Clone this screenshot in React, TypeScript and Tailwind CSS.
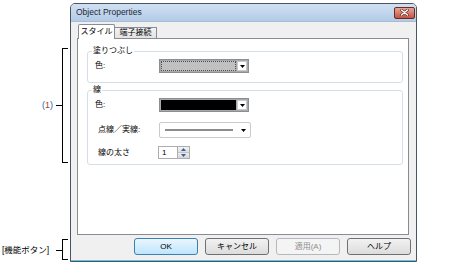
import React from "react";

const jp = "font-['Liberation_Sans','Noto_Sans_CJK_JP',sans-serif]";

function Arrow({ color = "#000" }: { color?: string }) {
  return (
    <svg width="5" height="3" viewBox="0 0 5 3">
      <path d="M0 0 H5 L2.5 3 Z" fill={color} />
    </svg>
  );
}

function ColorCombo({ fill, dotted }: { fill: string; dotted?: boolean }) {
  return (
    <div className="w-[90px] h-[14px] border border-[#8a8f96] bg-[#a9a9a9] flex p-[1px] gap-[1px]">
      <div
        className={
          "flex-1 " +
          (dotted ? "border border-dotted border-[#505050] " : "") +
          fill
        }
      />
      <div className="w-[10px] bg-white border border-[#c9c9c9] flex items-center justify-center">
        <Arrow />
      </div>
    </div>
  );
}

function Btn({
  children,
  primary,
  disabled,
}: {
  children: React.ReactNode;
  primary?: boolean;
  disabled?: boolean;
}) {
  const cls = primary
    ? "border-[#3c7fb1] bg-linear-to-b from-[#eaf6fd] to-[#bee6fd] text-black"
    : disabled
    ? "border-[#b5b8bb] bg-[#f4f4f4] text-[#8d8d8d]"
    : "border-[#707070] bg-linear-to-b from-[#f2f2f2] to-[#dcdcdc] text-black";
  return (
    <div
      className={
        "w-[64px] h-[17px] rounded-[3px] border flex items-center justify-center text-[8px] leading-none " +
        cls
      }
    >
      {children}
    </div>
  );
}

export default function App() {
  return (
    <div className={"w-[473px] h-[267px] bg-white flex " + jp}>
      {/* annotation column */}
      <div className="relative w-[70px] shrink-0">
        {/* bracket (1) */}
        <div className="absolute left-[62px] top-[48px] w-[6px] h-[115px] border-l border-t border-b border-black" />
        <div className="absolute left-[56px] top-[105px] w-[6px] h-px bg-black" />
        <div className="absolute left-[42px] top-[99px] text-[9px] leading-[12px] text-[#2a5db0]">
          (<span className="text-[#b0402a]">1</span>)
        </div>
        {/* bracket buttons */}
        <div className="absolute left-[62px] top-[239px] w-[6px] h-[21px] border-l border-t border-b border-black" />
        <div className="absolute left-[56px] top-[250px] w-[6px] h-px bg-black" />
        <div className="absolute left-[2px] top-[244px] text-[8.5px] leading-[12px] text-black whitespace-nowrap">
          [機能ボタン]
        </div>
      </div>

      {/* window */}
      <div className="mt-[3px] w-[347px] h-[259px] flex flex-col border border-[#4b5560] rounded-t-[5px] overflow-hidden bg-[#f0f0f0]">
        {/* title bar */}
        <div className="h-[18px] shrink-0 flex items-center justify-between pl-[5px] pr-[1px] bg-linear-to-b from-[#d0e0f2] to-[#b3cbe7] border-b border-[#a7bdd6]">
          <span className="text-[8.5px] text-[#1b2735] leading-none">Object Properties</span>
          <div className="w-[21px] h-[12px] rounded-[2px] border border-[#6b2c23] bg-linear-to-b from-[#e6a597] to-[#c25443] flex items-center justify-center">
            <svg width="9" height="7" viewBox="0 0 9 7">
              <path d="M1.5 1 L7.5 6 M7.5 1 L1.5 6" stroke="#5a2018" strokeWidth="2.6" strokeLinecap="round" />
              <path d="M1.5 1 L7.5 6 M7.5 1 L1.5 6" stroke="#ffffff" strokeWidth="1.5" strokeLinecap="round" />
            </svg>
          </div>
        </div>

        {/* body */}
        <div className="flex-1 flex flex-col border-b border-[#62c3e8]">
          <div className="pl-[6px] pr-[7px]">
            {/* tabs */}
            <div className="h-[16px] flex items-end pl-[1px]">
              <div className="relative z-10 -mb-px h-[15px] w-[37px] bg-white border border-b-0 border-[#898c95] rounded-t-[2px] flex items-center justify-center text-[8px] leading-none">
                スタイル
              </div>
              <div className="h-[11px] w-[42px] bg-linear-to-b from-[#f3f3f3] to-[#e3e3e3] border border-l-0 border-b-0 border-[#898c95] flex items-center justify-center text-[8px] leading-none">
                端子接続
              </div>
            </div>
            {/* panel */}
            <div className="h-[197px] bg-white border border-[#898c95] pl-[9px] pt-[12px]">
              {/* group 1 */}
              <div className="relative w-[316px] h-[32px] border border-[#d5dfe5] rounded-[3px] pl-[7px] pt-[7px]">
                <span className="absolute left-[4px] -top-[6px] bg-white px-[1px] text-[8px] leading-[10px]">
                  塗りつぶし
                </span>
                <div className="flex items-center">
                  <span className="w-[64px] text-[8px] leading-none">色:</span>
                  <ColorCombo fill="bg-[#c0c0c0]" dotted />
                </div>
              </div>

              {/* group 2 */}
              <div className="relative mt-[7px] w-[316px] h-[75px] border border-[#d5dfe5] rounded-[3px] pl-[7px] pt-[7px]">
                <span className="absolute left-[4px] -top-[6px] bg-white px-[1px] text-[8px] leading-[10px]">
                  線
                </span>
                <div className="flex items-center">
                  <span className="w-[64px] text-[8px] leading-none">色:</span>
                  <ColorCombo fill="bg-black" />
                </div>
                <div className="flex items-center mt-[10px]">
                  <span className="w-[64px] text-[8px] leading-none pl-[3px]">点線／実線:</span>
                  <div className="w-[92px] h-[16px] border border-[#cacaca] rounded-[2px] bg-white flex items-center pl-[5px] pr-[4px]">
                    <div className="w-[68px] h-[2px] bg-[#8c8c8c]" />
                    <div className="flex-1" />
                    <Arrow />
                  </div>
                </div>
                <div className="flex items-center mt-[8px]">
                  <span className="w-[63px] text-[8px] leading-none pl-[3px]">線の太さ</span>
                  <div className="w-[20px] h-[13px] border border-[#abadb3] bg-white flex items-center pl-[3px] text-[8px] leading-none">
                    1
                  </div>
                  <div className="w-[12px] h-[13px] flex flex-col border border-l-0 border-[#abadb3]">
                    <div className="flex-1 bg-linear-to-b from-[#f4f4f4] to-[#dedede] border-b border-[#c3c3c3] flex items-center justify-center">
                      <svg width="5" height="3" viewBox="0 0 5 3">
                        <path d="M0 3 H5 L2.5 0 Z" fill="#3a5f9a" />
                      </svg>
                    </div>
                    <div className="flex-1 bg-linear-to-b from-[#ececec] to-[#d6d6d6] flex items-center justify-center">
                      <Arrow color="#3a5f9a" />
                    </div>
                  </div>
                </div>
              </div>
            </div>
          </div>

          {/* buttons */}
          <div className="mt-[3px] flex justify-end gap-[7px] pr-[5px]">
            <Btn primary>OK</Btn>
            <Btn>キャンセル</Btn>
            <Btn disabled>適用(A)</Btn>
            <Btn>ヘルプ</Btn>
          </div>
        </div>
      </div>
    </div>
  );
}
